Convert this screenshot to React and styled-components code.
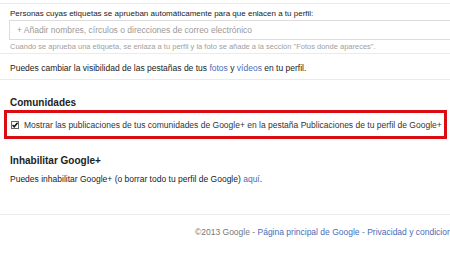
import React from "react";
import styled, { createGlobalStyle } from "styled-components";

const GlobalStyle = createGlobalStyle`
  html, body {
    margin: 0;
    padding: 0;
    background: #fff;
  }
  body {
    font-family: "Liberation Sans", Arial, sans-serif;
    color: #222;
  }
  * {
    box-sizing: border-box;
  }
`;

const Page = styled.div`
  width: 450px;
  height: 253px;
  overflow: hidden;
  white-space: nowrap;
  background: #fff;
`;

const Divider = styled.div`
  height: 1px;
  background: #ebebeb;
  margin-top: ${({ $top }) => $top || 0}px;
`;

const Section = styled.div`
  padding: 0 10px;
`;

const Label = styled.div`
  font-size: 8px;
  line-height: 10px;
  color: #222;
  padding-top: 5px;
`;

const Input = styled.div`
  height: 20px;
  width: 460px;
  margin: 1px 0 0 -1px;
  border: 1px solid #dcdcdc;
  border-right: none;
  display: flex;
  align-items: center;
  padding-left: 7px;
  font-size: 8.5px;
  color: #999;
`;

const Hint = styled.div`
  font-size: 7.5px;
  line-height: 10px;
  color: #a0a0a0;
  margin-top: 2px;
`;

const Text = styled.div`
  font-size: 8.5px;
  line-height: 10px;
  color: #222;
  padding-top: ${({ $top }) => $top || 0}px;
`;

const Link = styled.a`
  color: #4a6cb8;
  text-decoration: none;
`;

const Heading = styled.div`
  font-size: 10px;
  line-height: 12px;
  font-weight: bold;
  color: #222;
  padding-top: ${({ $top }) => $top || 0}px;
`;

const Highlight = styled.div`
  margin: 1px 0 0 4px;
  width: 443px;
  height: 29px;
  border: 3px solid #d90d12;
  display: flex;
  align-items: center;
  padding-left: 4px;
  font-size: 8.5px;
  color: #333;
  overflow: hidden;
`;

const Check = styled.span`
  width: 8px;
  height: 8px;
  border: 1px solid #666;
  background: #fff;
  margin-right: 5px;
  flex: none;
  display: flex;
  align-items: center;
  justify-content: center;
`;

const Footer = styled.div`
  font-size: 8.5px;
  line-height: 10px;
  color: #777;
  padding: 12px 0 0 195px;
`;

export default function App() {
  return (
    <Page>
      <GlobalStyle />
      <Divider $top={3} />
      <Section>
        <Label>
          Personas cuyas etiquetas se aprueban automáticamente para que enlacen a tu perfil:
        </Label>
        <Input>+ Añadir nombres, círculos o direcciones de correo electrónico</Input>
        <Hint>
          Cuando se aprueba una etiqueta, se enlaza a tu perfil y la foto se añade a la sección "Fotos donde apareces".
        </Hint>
      </Section>
      <Divider $top={1} />
      <Section>
        <Text $top={9}>
          Puedes cambiar la visibilidad de las pestañas de tus <Link>fotos</Link> y{" "}
          <Link>vídeos</Link> en tu perfil.
        </Text>
      </Section>
      <Divider $top={6} />
      <Section>
        <Heading $top={17}>Comunidades</Heading>
      </Section>
      <Highlight>
        <Check>
          <svg width="6" height="6" viewBox="0 0 6 6">
            <path d="M0.5 3 L2.2 4.8 L5.6 0.8" fill="none" stroke="#111" strokeWidth="1.5" />
          </svg>
        </Check>
        Mostrar las publicaciones de tus comunidades de Google+ en la pestaña Publicaciones de tu perfil de Google+
      </Highlight>
      <Section>
        <Heading $top={16}>Inhabilitar Google+</Heading>
        <Text $top={7}>
          Puedes inhabilitar Google+ (o borrar todo tu perfil de Google) <Link>aquí</Link>.
        </Text>
      </Section>
      <Divider $top={30} />
      <Footer>
        ©2013 Google - <Link>Página principal de Google</Link> - <Link>Privacidad y condiciones</Link>
      </Footer>
    </Page>
  );
}
